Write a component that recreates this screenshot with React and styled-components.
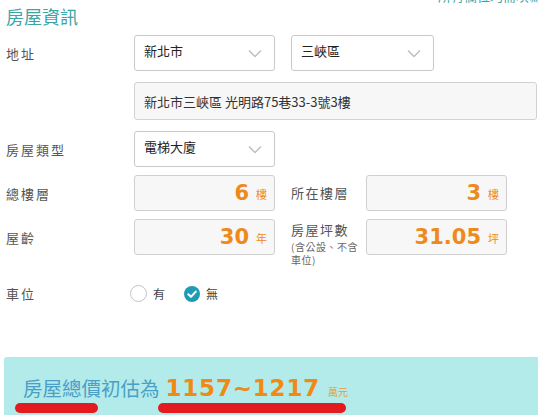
import React from "react";
import styled, { createGlobalStyle } from "styled-components";

const GlobalStyle = createGlobalStyle`
  html, body {
    margin: 0;
    padding: 0;
    background: #fff;
    overflow: hidden;
  }
  body {
    font-family: "Noto Sans CJK TC", "Noto Sans", sans-serif;
    color: #555;
  }
`;

const Chevron = () => (
  <svg width="14" height="9" viewBox="0 0 14 9">
    <path d="M1 1.5 L7 7.5 L13 1.5" fill="none" stroke="#bdbdbd" strokeWidth="1.4" />
  </svg>
);

const Check = () => (
  <svg width="16" height="16" viewBox="0 0 16 16">
    <circle cx="8" cy="8" r="8" fill="#1f9bb5" />
    <path d="M4.3 8.2 L7 10.8 L11.8 5.6" fill="none" stroke="#fff" strokeWidth="2" strokeLinecap="round" strokeLinejoin="round" />
  </svg>
);

export default function App() {
  return (
    <Page>
      <GlobalStyle />
      <Header>
        <Title>房屋資訊</Title>
        <Note>所有欄位均需填寫</Note>
      </Header>

      <Row $mt={6}>
        <Label>地址</Label>
        <Fields>
          <Select $w={141}>
            <span>新北市</span>
            <Chevron />
          </Select>
          <Select $w={143}>
            <span>三峽區</span>
            <Chevron />
          </Select>
        </Fields>
      </Row>

      <Row $mt={11}>
        <Label />
        <TextBox>新北市三峽區 光明路75巷33-3號3樓</TextBox>
      </Row>

      <Row $mt={11}>
        <Label>房屋類型</Label>
        <Select $w={141}>
          <span>電梯大廈</span>
          <Chevron />
        </Select>
      </Row>

      <Row $mt={8}>
        <Label>總樓層</Label>
        <Fields>
          <NumBox>
            <Num>6</Num>
            <Unit>樓</Unit>
          </NumBox>
          <SubLabel>所在樓層</SubLabel>
          <NumBox>
            <Num>3</Num>
            <Unit>樓</Unit>
          </NumBox>
        </Fields>
      </Row>

      <Row $mt={8}>
        <Label>屋齡</Label>
        <Fields>
          <NumBox>
            <Num>30</Num>
            <Unit>年</Unit>
          </NumBox>
          <SubLabel $top>
            房屋坪數
            <Small>(含公設、不含車位)</Small>
          </SubLabel>
          <NumBox>
            <Num>31.05</Num>
            <Unit>坪</Unit>
          </NumBox>
        </Fields>
      </Row>

      <Row $mt={29}>
        <Label>車位</Label>
        <Radios>
          <Radio>
            <Circle />
            有
          </Radio>
          <Radio>
            <Check />
            無
          </Radio>
        </Radios>
      </Row>

      <Result>
        <ResultText>房屋總價初估為</ResultText>
        <Price>1157~1217</Price>
        <PriceUnit>萬元</PriceUnit>
        <Mark $l={11} $w={83} />
        <Mark $l={154} $w={188} />
      </Result>
    </Page>
  );
}

const Page = styled.div`
  width: 538px;
  height: 415px;
  overflow: hidden;
`;

const Header = styled.div`
  display: flex;
  justify-content: space-between;
  align-items: flex-start;
  padding-left: 6px;
`;

const Title = styled.h2`
  margin: 3px 0 0;
  font-size: 18px;
  font-weight: 400;
  line-height: 26px;
  color: #3ba5a6;
`;

const Note = styled.div`
  margin-top: -12px;
  margin-right: -4px;
  font-size: 13px;
  line-height: 16px;
  color: #3ba5a6;
`;

const Row = styled.div`
  display: flex;
  align-items: center;
  margin-top: ${(p) => p.$mt}px;
  padding-left: 6px;
`;

const Label = styled.div`
  width: 128px;
  flex-shrink: 0;
  font-size: 13px;
  letter-spacing: 2px;
  color: #555;
`;

const Fields = styled.div`
  display: flex;
  align-items: center;
  gap: 16px;
`;

const Select = styled.div`
  box-sizing: border-box;
  width: ${(p) => p.$w}px;
  height: 36px;
  display: flex;
  align-items: center;
  justify-content: space-between;
  padding: 0 12px 0 9px;
  border: 1px solid #c9c9c9;
  border-radius: 3px;
  background: #fff;
  font-size: 13px;
  color: #222;
  span {
    margin-top: -6px;
  }
`;

const TextBox = styled.div`
  box-sizing: border-box;
  width: 403px;
  height: 38px;
  display: flex;
  align-items: center;
  padding-left: 9px;
  border: 1px solid #d2d2d2;
  border-radius: 3px;
  background: #f7f7f7;
  font-size: 13px;
  color: #333;
`;

const NumBox = styled.div`
  box-sizing: border-box;
  width: 141px;
  height: 36px;
  display: flex;
  align-items: center;
  justify-content: flex-end;
  gap: 7px;
  padding-right: 7px;
  border: 1px solid #d0d0d0;
  border-radius: 3px;
  background: #f7f7f7;
`;

const Num = styled.span`
  font-family: "DejaVu Sans", Verdana, sans-serif;
  font-weight: 700;
  font-size: 21px;
  color: #ee8a1c;
`;

const Unit = styled.span`
  font-size: 11px;
  color: #ee8a1c;
  margin-top: 2px;
`;

const SubLabel = styled.div`
  width: 75px;
  margin-right: -16px;
  font-size: 13px;
  letter-spacing: 1.5px;
  color: #555;
  line-height: 16px;
  white-space: nowrap;
  align-self: ${(p) => (p.$top ? "flex-start" : "center")};
  margin-top: ${(p) => (p.$top ? "3px" : "0")};
  margin-bottom: ${(p) => (p.$top ? "-12px" : "0")};
`;

const Small = styled.div`
  width: 75px;
  white-space: normal;
  font-size: 10px;
  letter-spacing: 0.5px;
  line-height: 13px;
  margin-top: 2px;
  color: #666;
`;

const Radios = styled.div`
  display: flex;
  align-items: center;
  gap: 19px;
  margin-left: -4px;
`;

const Radio = styled.label`
  display: flex;
  align-items: center;
  gap: 6px;
  font-size: 12px;
  color: #444;
`;

const Circle = styled.span`
  box-sizing: border-box;
  width: 17px;
  height: 17px;
  border-radius: 50%;
  border: 1px solid #c4c4c4;
  background: #fff;
`;

const Result = styled.div`
  position: relative;
  margin: 54px 0 0 4px;
  height: 80px;
  background: #b3ebea;
  border-radius: 3px 0 0 0;
  display: flex;
  align-items: baseline;
  padding: 16px 0 0 19px;
  box-sizing: border-box;
`;

const ResultText = styled.span`
  font-size: 19.5px;
  color: #4b9fc7;
`;

const Price = styled.span`
  margin-left: 6px;
  font-family: "DejaVu Sans", Verdana, sans-serif;
  font-weight: 700;
  font-size: 23px;
  letter-spacing: 0.8px;
  color: #ef8a16;
`;

const PriceUnit = styled.span`
  margin-left: 8px;
  font-size: 10px;
  color: #e59a45;
`;

const Mark = styled.div`
  position: absolute;
  left: ${(p) => p.$l}px;
  top: 46px;
  width: ${(p) => p.$w}px;
  height: 10px;
  border-radius: 5px;
  background: #e31b1f;
`;
